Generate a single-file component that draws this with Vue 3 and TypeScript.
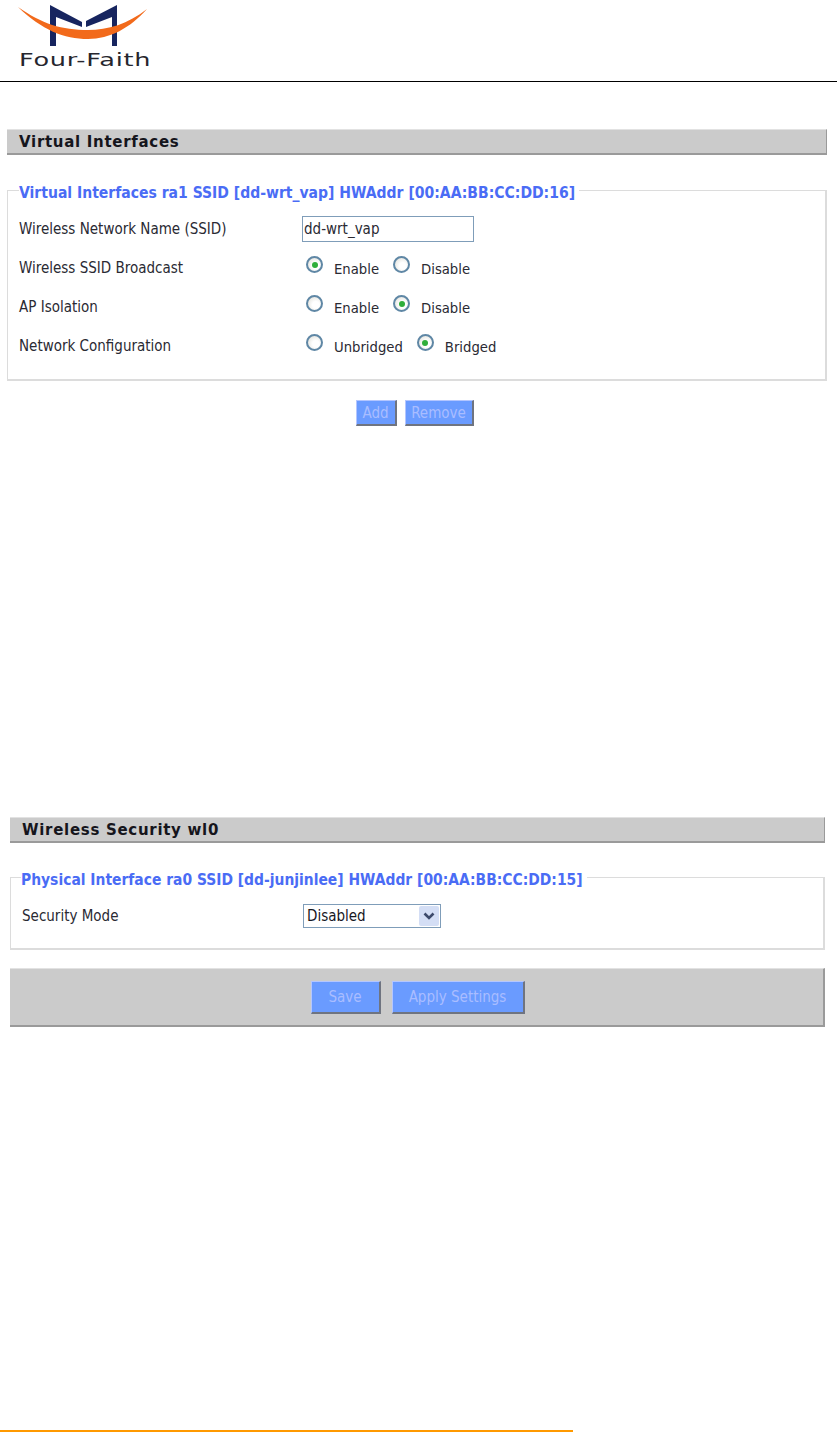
<template>
  <div class="page">
    <header class="top">
      <svg class="logo" width="160" height="50" viewBox="0 0 160 50">
        <path d="M50 5 L82 22 L82 27 L56 17 L56 46 L50 46 Z" fill="#17255f" />
        <path d="M117 5 L86 21 L86 27 L112 17 L112 46 L117 46 Z" fill="#17255f" />
        <path d="M18 7 C42 30 64 39 88 39 C110 39 130 28 147 9 C128 24 108 30 88 30 C62 30 42 24 18 7 Z" fill="#f26a1b" />
      </svg>
      <span class="brand">Four-Faith</span>
    </header>

    <section class="block block-one">
      <h2 class="bar">Virtual Interfaces</h2>
      <fieldset class="group group-one">
        <legend>Virtual Interfaces ra1 SSID [dd-wrt_vap] HWAddr [00:AA:BB:CC:DD:16]</legend>
        <div class="row">
          <span class="label">Wireless Network Name (SSID)</span>
          <input class="text" type="text" value="dd-wrt_vap" />
        </div>
        <div v-for="row in radioRows" :key="row.label" class="row">
          <span class="label">{{ row.label }}</span>
          <span class="radios">
            <span v-for="opt in row.options" :key="opt" class="radio-item">
              <span class="radio" :class="{ on: opt === row.selected }"></span>
              <span>{{ opt }}</span>
            </span>
          </span>
        </div>
      </fieldset>
      <div class="actions">
        <button class="btn small">Add</button>
        <button class="btn small">Remove</button>
      </div>
    </section>

    <section class="block block-two">
      <h2 class="bar">Wireless Security wl0</h2>
      <fieldset class="group group-two">
        <legend>Physical Interface ra0 SSID [dd-junjinlee] HWAddr [00:AA:BB:CC:DD:15]</legend>
        <div class="row">
          <span class="label">Security Mode</span>
          <div class="select">
            <span>Disabled</span>
            <span class="arrow">
              <svg width="14" height="11" viewBox="0 0 14 11">
                <path d="M2.5 2.5 L7 7 L11.5 2.5" fill="none" stroke="#3d4a6b" stroke-width="2.6" />
              </svg>
            </span>
          </div>
        </div>
      </fieldset>
      <div class="submit">
        <button class="btn large save">Save</button>
        <button class="btn large apply">Apply Settings</button>
      </div>
    </section>

    <div class="foot-line"></div>
  </div>
</template>

<script setup lang="ts">
const radioRows = [
  { label: "Wireless SSID Broadcast", options: ["Enable", "Disable"], selected: "Enable" },
  { label: "AP Isolation", options: ["Enable", "Disable"], selected: "Disable" },
  { label: "Network Configuration", options: ["Unbridged", "Bridged"], selected: "Bridged" },
];
</script>

<style>
body {
  background: #fff;
}
</style>

<style scoped>
.page {
  width: 837px;
  height: 1432px;
  overflow: hidden;
  display: flex;
  flex-direction: column;
  font-family: "DejaVu Sans Condensed", "DejaVu Sans", sans-serif;
  font-size: 15px;
  color: #2a2a33;
}

.top {
  position: relative;
  height: 81px;
  flex: none;
  border-bottom: 1px solid #000;
  box-sizing: content-box;
}

.logo {
  display: block;
}

.brand {
  position: absolute;
  left: 19px;
  top: 49px;
  font-family: "DejaVu Sans", sans-serif;
  font-size: 18px;
  line-height: 22px;
  letter-spacing: 0.5px;
  color: #26262e;
  transform: scaleX(1.42);
  transform-origin: left center;
}

.block-one {
  margin: 47px 10px 0 7px;
  height: 688px;
  flex: none;
}

.block-two {
  margin: 0 12px 0 10px;
}

.bar {
  margin: 0;
  height: 26px;
  box-sizing: border-box;
  padding-left: 12px;
  background: #cbcbcb;
  border-top: 1px solid #e2e2e2;
  border-right: 1px solid #9a9a9a;
  border-bottom: 2px solid #9a9a9a;
  font-family: "DejaVu Sans", sans-serif;
  font-size: 15px;
  line-height: 25px;
  font-weight: 700;
  letter-spacing: 0.7px;
  color: #15151c;
}

.group {
  margin: 0;
  padding: 0 11px;
  min-width: 0;
  border: 1px solid #dcdcdc;
  border-width: 1px 2px 2px 1px;
}

.group legend {
  padding: 6px 4px 0 0;
  font-size: 15.55px;
  font-weight: 700;
  line-height: 18px;
  color: #4a6cf5;
}

.group-one {
  margin-top: 23px;
  height: 203px;
  box-sizing: border-box;
  padding-top: 7px;
}

.group-two {
  margin-top: 22px;
  height: 85px;
  box-sizing: border-box;
  padding-top: 8px;
}

.group-two legend {
  font-size: 15.45px;
  margin-left: -1px;
}

.row {
  display: flex;
  align-items: center;
  height: 39px;
}

.group-two .row {
  height: 38px;
}

.label {
  width: 283px;
  flex: none;
}

.group-two .label {
  width: 281px;
}

.text {
  width: 172px;
  height: 26px;
  box-sizing: border-box;
  padding: 0 1px;
  border: 1px solid #7f9db9;
  font: inherit;
  color: #2a2a33;
  outline: none;
}

.radios {
  display: flex;
  gap: 14px;
  margin-left: 4px;
  font-size: 14.7px;
}

.radio-item {
  display: flex;
  align-items: center;
  gap: 11px;
}

.radio-item > span:last-child {
  position: relative;
  top: 1px;
}

.radio {
  width: 17px;
  height: 17px;
  box-sizing: border-box;
  border-radius: 50%;
  border: 2px solid #5f87a5;
  background: radial-gradient(circle at 60% 60%, #fff 30%, #dcdcd4 100%);
  position: relative;
  top: -3px;
}

.radio.on::after {
  content: "";
  position: absolute;
  left: 3.5px;
  top: 3.5px;
  width: 6px;
  height: 6px;
  border-radius: 50%;
  background: #2fae3a;
}

.actions {
  display: flex;
  justify-content: center;
  gap: 8px;
  margin-top: 19px;
  padding-right: 5px;
}

.btn {
  border: 1px solid;
  border-color: #b4c6ff #6f7480 #6f7480 #b4c6ff;
  border-width: 1px 2px 2px 1px;
  background: #6a9bff;
  color: #a9bdff;
  font-family: "DejaVu Sans Condensed", "DejaVu Sans", sans-serif;
  font-size: 15px;
  padding: 0;
  box-sizing: border-box;
}

.btn.small {
  height: 26px;
}

.btn.small:first-child {
  width: 41px;
}

.btn.small:last-child {
  width: 69px;
}

.btn.large {
  height: 33px;
}

.save {
  width: 70px;
}

.apply {
  width: 133px;
}

.select {
  display: flex;
  align-items: center;
  justify-content: space-between;
  width: 138px;
  height: 24px;
  box-sizing: border-box;
  padding: 0 1px 0 3px;
  border: 1px solid #7f9db9;
  color: #17171f;
}

.arrow {
  width: 20px;
  height: 20px;
  display: flex;
  align-items: center;
  justify-content: center;
  background: #d4def5;
  border-radius: 2px;
}

.submit {
  display: flex;
  justify-content: center;
  gap: 11px;
  align-items: center;
  margin-top: 18px;
  height: 59px;
  box-sizing: border-box;
  padding-left: 2px;
  background: #cbcbcb;
  border-top: 1px solid #e2e2e2;
  border-right: 2px solid #9a9a9a;
  border-bottom: 2px solid #9a9a9a;
}

.foot-line {
  margin-top: auto;
  width: 573px;
  height: 2px;
  background: #ff9900;
}
</style>
